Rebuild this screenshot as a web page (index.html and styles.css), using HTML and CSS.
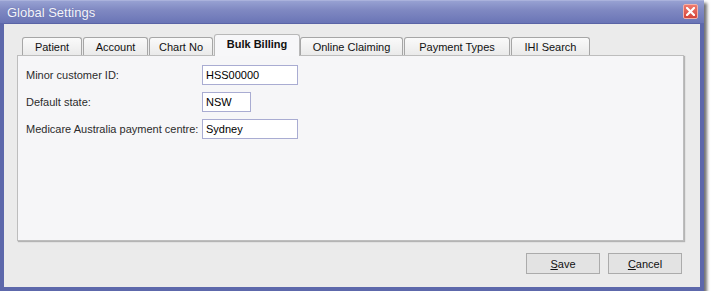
FILE: index.html
```html
<!DOCTYPE html>
<html lang="en">
<head>
<meta charset="UTF-8">
<title>Global Settings</title>
<link rel="stylesheet" href="styles.css">
</head>
<body>

<div class="window">
  <div class="titlebar">
    <span class="title">Global Settings</span>
    <span class="close">
      <svg width="9" height="9" viewBox="0 0 9 9"><path d="M1 1L8 8M8 1L1 8" stroke="#fff" stroke-width="2.2" stroke-linecap="square"/></svg>
    </span>
  </div>

  <div class="client">
    <div class="tabs">
      <div class="tab w-patient">Patient</div>
      <div class="tab w-account">Account</div>
      <div class="tab w-chart">Chart No</div>
      <div class="tab active w-bulk">Bulk Billing</div>
      <div class="tab w-online">Online Claiming</div>
      <div class="tab w-payment">Payment Types</div>
      <div class="tab w-ihi">IHI Search</div>
    </div>

    <div class="panel">
      <div class="row">
        <label>Minor customer ID:</label>
        <input type="text" class="field" value="HSS00000">
      </div>
      <div class="row">
        <label>Default state:</label>
        <input type="text" class="field short" value="NSW">
      </div>
      <div class="row">
        <label>Medicare Australia payment centre:</label>
        <input type="text" class="field" value="Sydney">
      </div>
    </div>

    <div class="actions">
      <button class="btn"><u>S</u>ave</button>
      <button class="btn"><u>C</u>ancel</button>
    </div>
  </div>
</div>

</body>
</html>
```

FILE: styles.css
```css
body {
    margin: 0;
    background: #ffffff;
    font-family: "Liberation Sans", Arial, sans-serif;
    font-size: 11px;
    color: #000;
}

.window {
    width: 704px;
    height: 291px;
    box-sizing: border-box;
    background: #5d68ab;
    padding: 0 4px 4px 4px;
    display: flex;
    flex-direction: column;
    box-shadow: 3px 3px 3px rgba(0, 0, 0, 0.55);
}

.titlebar {
    height: 23px;
    margin: 0 -4px;
    padding: 0 6px 0 7px;
    display: flex;
    align-items: center;
    justify-content: space-between;
    background: linear-gradient(#97a1d2, #8089c2 40%, #6a75b6);
    border-top: 1px solid #aab2dc;
    box-sizing: border-box;
}

.title {
    color: #f4f5fb;
    font-size: 13px;
    text-shadow: 0 0 1px #5a64a0;
}

.close {
    width: 15px;
    height: 15px;
    box-sizing: border-box;
    border: 1px solid #f3b0a8;
    border-radius: 2px;
    background: linear-gradient(#ee7a6e, #d4453b);
    display: flex;
    align-items: center;
    justify-content: center;
    margin-top: -2px;
}

.client {
    flex: 1;
    background: #ebebeb;
    padding: 10px 16px 0 13px;
    display: flex;
    flex-direction: column;
    border-top: 1px solid #5a64a6;
}

.tabs {
    display: flex;
    align-items: flex-end;
    padding-left: 5px;
    height: 21px;
}

.tab {
    height: 18px;
    box-sizing: border-box;
    margin-right: 1px;
    border: 1px solid #a6a6a6;
    border-bottom: none;
    border-radius: 3px 3px 0 0;
    background: linear-gradient(#fafafa, #eaeaea);
    display: flex;
    align-items: center;
    justify-content: center;
    color: #111;
}

.tab.active {
    height: 22px;
    margin-right: 0;
    margin-bottom: -1px;
    position: relative;
    background: #f7f7f9;
    font-weight: bold;
    border-color: #b8b8b8;
    padding-bottom: 3px;
}

.w-patient { width: 60px; }
.w-account { width: 65px; }
.w-chart { width: 64px; }
.w-bulk { width: 86px; }
.w-online { width: 103px; }
.w-payment { width: 106px; }
.w-ihi { width: 79px; }

.panel {
    height: 186px;
    box-sizing: border-box;
    background: #f6f6f8;
    border: 1px solid #bdbdbd;
    box-shadow: 1px 1px 1px #b4b4b4;
    padding: 9px 0 0 8px;
    display: flex;
    flex-direction: column;
    gap: 7px;
}

.row {
    display: flex;
    align-items: center;
    height: 20px;
}

.row label {
    width: 176px;
    color: #2c2c2c;
}

.field {
    width: 96px;
    height: 20px;
    box-sizing: border-box;
    border: 1px solid #a9acd2;
    background: #fff;
    padding: 0 3px;
    font-family: inherit;
    font-size: 11px;
    color: #000;
    outline: none;
}

.field.short {
    width: 49px;
}

.actions {
    display: flex;
    justify-content: flex-end;
    gap: 8px;
    margin-top: 12px;
    padding-right: 2px;
}

.btn {
    width: 74px;
    height: 21px;
    border: 1px solid #ababab;
    background: #e3e3e3;
    font-family: inherit;
    font-size: 11px;
    color: #111;
    padding: 0;
}
```
